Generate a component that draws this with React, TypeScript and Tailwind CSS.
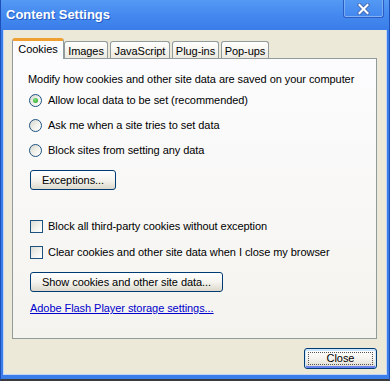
import React from "react";

function Radio({ checked }: { checked?: boolean }) {
  return (
    <span className="w-[13px] h-[13px] rounded-full border border-[#1c5180] bg-linear-to-br from-[#d6d6cf] via-[#f0f0ea] to-[#ffffff] flex items-center justify-center shrink-0">
      {checked && (
        <span className="w-[5px] h-[5px] rounded-full bg-[radial-gradient(circle_at_40%_35%,#7fe07f,#21a121)]" />
      )}
    </span>
  );
}

function Check() {
  return (
    <span className="w-[13px] h-[13px] border border-[#1c5180] bg-linear-to-br from-[#dcdcd7] via-[#f1f1ec] to-[#ffffff] shrink-0" />
  );
}

function XpButton({ children, w }: { children: React.ReactNode; w: string }) {
  return (
    <div
      className={`${w} h-[20px] rounded-[3px] border border-[#003c74] bg-linear-to-b from-[#ffffff] via-[#f5f4ef] to-[#dcd8cc] flex items-center justify-center text-black leading-[13px]`}
    >
      {children}
    </div>
  );
}

export default function App() {
  return (
    <div className="w-[390px] h-[381px] flex flex-col bg-[#3b7de9] border-x border-[#1d4fb8] border-b-2 border-b-[#3a3a3a] font-['Liberation_Sans',sans-serif] text-[11px] tracking-[-0.06px] text-black overflow-hidden">
      {/* title bar */}
      <div className="h-[30px] shrink-0 flex items-start justify-between pl-[5px] pr-[5px] bg-linear-to-b from-[#5499f3] via-[#4489ef] to-[#3a7de9]">
        <div className="h-[30px] flex items-center text-white font-bold text-[13px] tracking-normal [text-shadow:1px_1px_0_#2459c2]">
          Content Settings
        </div>
        <div className="w-[41px] h-[18px] rounded-b-[3px] border-x border-b border-[#2a5cc4] [box-shadow:inset_0_-1px_0_rgba(255,255,255,0.35),inset_1px_0_0_rgba(255,255,255,0.25),inset_-1px_0_0_rgba(255,255,255,0.25)] flex items-center justify-center">
          <svg width="13" height="12" viewBox="0 0 13 12">
            <path d="M2.5 2 L10.5 10 M10.5 2 L2.5 10" stroke="#4a6fb8" strokeWidth="4" strokeLinecap="square" />
            <path d="M2.5 2 L10.5 10 M10.5 2 L2.5 10" stroke="#ffffff" strokeWidth="2" strokeLinecap="square" />
          </svg>
        </div>
      </div>
      {/* body */}
      <div className="mx-[2px] mb-[4px] h-[345px] flex flex-col bg-[#ece9d8] border-x border-b border-[#c3d5f6] pl-[8px] pr-[9px] pt-[8px]">
        {/* tabs */}
        <div className="h-[20px] flex items-end shrink-0">
          <div className="relative z-10 w-[52px] h-[21px] -mb-[1px] bg-[#fcfcfe] border-x border-[#919b9c] rounded-t-[3px] border-t-[3px] border-t-[#f0a030] flex justify-center pt-[2px] leading-[13px]">
            Cookies
          </div>
          <div className="w-[44px] h-[17px] bg-linear-to-b from-[#ffffff] to-[#eceae0] border-x border-t border-[#919b9c] rounded-t-[3px] flex items-center justify-center leading-[13px] pt-[2px]">
            Images
          </div>
          <div className="ml-[2px] w-[60px] h-[17px] bg-linear-to-b from-[#ffffff] to-[#eceae0] border-x border-t border-[#919b9c] rounded-t-[3px] flex items-center justify-center leading-[13px] pt-[2px]">
            JavaScript
          </div>
          <div className="ml-[2px] w-[47px] h-[17px] bg-linear-to-b from-[#ffffff] to-[#eceae0] border-x border-t border-[#919b9c] rounded-t-[3px] flex items-center justify-center leading-[13px] pt-[2px]">
            Plug-ins
          </div>
          <div className="ml-[2px] w-[48px] h-[17px] bg-linear-to-b from-[#ffffff] to-[#eceae0] border-x border-t border-[#919b9c] rounded-t-[3px] flex items-center justify-center leading-[13px] pt-[2px]">
            Pop-ups
          </div>
        </div>
        {/* panel */}
        <div className="h-[281px] shrink-0 border border-[#919b9c] bg-linear-to-b from-[#fcfcfe] to-[#f4f3ee] flex flex-col pl-[15px] pt-[14px]">
          <div className="h-[13px] leading-[13px]">
            Modify how cookies and other site data are saved on your computer
          </div>
          <div className="mt-[8px] h-[13px] flex items-center gap-[6px] ml-[1px] leading-[13px]">
            <Radio checked />
            <span>Allow local data to be set (recommended)</span>
          </div>
          <div className="mt-[12px] h-[13px] flex items-center gap-[6px] ml-[1px] leading-[13px]">
            <Radio />
            <span>Ask me when a site tries to set data</span>
          </div>
          <div className="mt-[12px] h-[13px] flex items-center gap-[6px] ml-[1px] leading-[13px]">
            <Radio />
            <span>Block sites from setting any data</span>
          </div>
          <div className="mt-[13px] ml-[2px]">
            <XpButton w="w-[86px]">Exceptions...</XpButton>
          </div>
          <div className="mt-[30px] h-[13px] flex items-center gap-[5px] ml-[2px] leading-[13px]">
            <Check />
            <span>Block all third-party cookies without exception</span>
          </div>
          <div className="mt-[13px] h-[13px] flex items-center gap-[5px] ml-[2px] leading-[13px]">
            <Check />
            <span>Clear cookies and other site data when I close my browser</span>
          </div>
          <div className="mt-[13px] ml-[2px]">
            <XpButton w="w-[193px]">Show cookies and other site data...</XpButton>
          </div>
          <div className="mt-[10px] ml-[2px] h-[13px] leading-[13px] text-[#0000cc] underline">
            Adobe Flash Player storage settings...
          </div>
        </div>
        {/* footer */}
        <div className="mt-[9px] flex justify-end shrink-0">
          <div className="w-[73px] h-[21px] rounded-[3px] border border-[#003c74] bg-linear-to-b from-[#ffffff] via-[#f5f4ef] to-[#dcd8cc] [box-shadow:inset_0_1px_0_1px_#cee7ff,inset_0_-1px_0_1px_#6982ee] p-[3px] flex">
            <div className="flex-1 border border-dotted border-[#555] flex items-center justify-center leading-[13px]">
              Close
            </div>
          </div>
        </div>
      </div>
    </div>
  );
}
